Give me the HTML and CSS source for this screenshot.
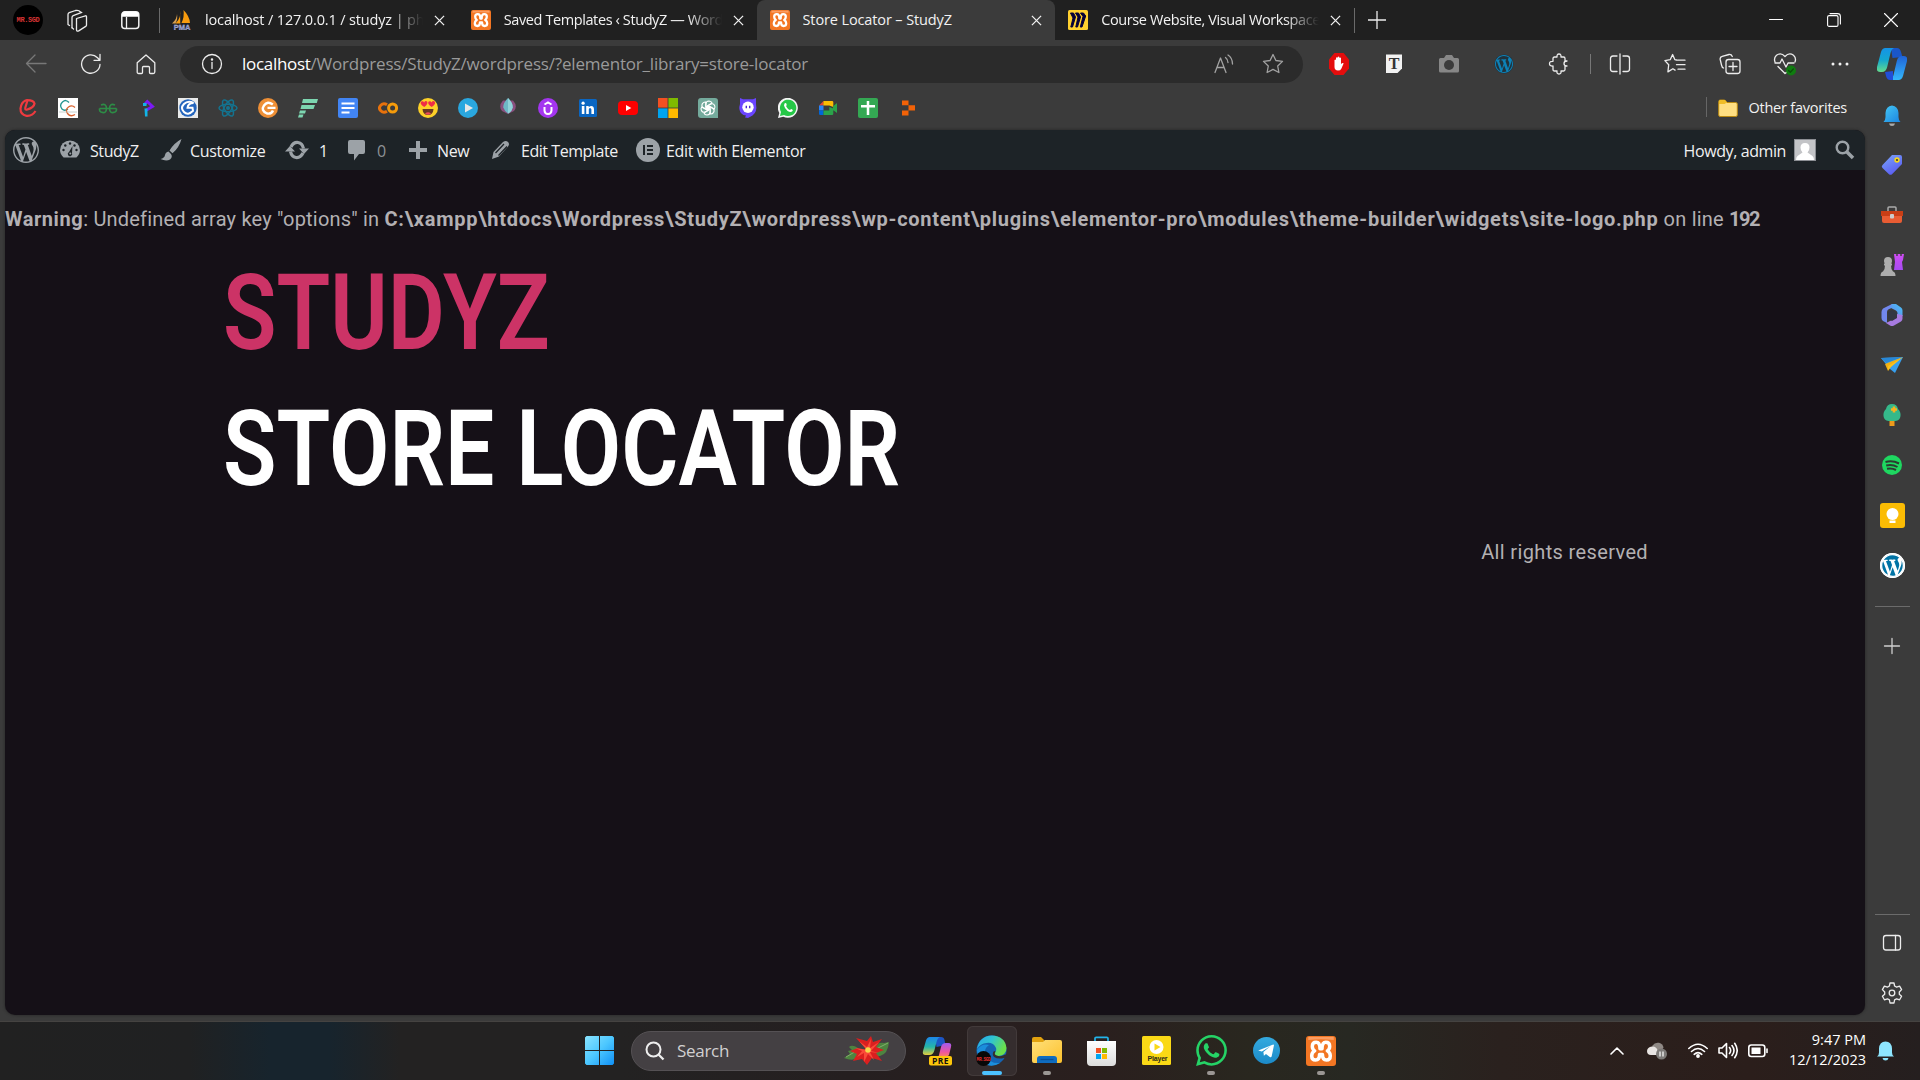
FILE: index.html
```html
<!DOCTYPE html>
<html lang="en">
<head>
<meta charset="utf-8">
<title>Store Locator – StudyZ</title>
<link rel="stylesheet" href="styles.css">
</head>
<body>
<svg class="defs" width="0" height="0" aria-hidden="true">
  <defs>
    <linearGradient id="gBlue" x1="0" y1="0" x2="1" y2="1"><stop offset="0" stop-color="#45c8f5"/><stop offset="1" stop-color="#1b84e0"/></linearGradient>
    <linearGradient id="gWin" x1="0" y1="0" x2="1" y2="1"><stop offset="0" stop-color="#8ae4ff"/><stop offset=".5" stop-color="#4cc7ff"/><stop offset="1" stop-color="#1090f5"/></linearGradient>
    <linearGradient id="gTag" x1="0" y1="0" x2=".6" y2="1"><stop offset="0" stop-color="#7ba7f8"/><stop offset="1" stop-color="#5a5cf2"/></linearGradient>
    <linearGradient id="gCopL" x1="0" y1="0" x2="0" y2="1"><stop offset="0" stop-color="#1593e8"/><stop offset=".5" stop-color="#14a7cf"/><stop offset="1" stop-color="#64dc8c"/></linearGradient>
    <linearGradient id="gCopR" x1="0" y1="0" x2="0" y2="1"><stop offset="0" stop-color="#1f63d8"/><stop offset="1" stop-color="#35b8fb"/></linearGradient>
    <linearGradient id="gPreL" x1="0" y1="0" x2="0" y2="1"><stop offset="0" stop-color="#1d86ea"/><stop offset=".55" stop-color="#25b6a8"/><stop offset="1" stop-color="#e6cf3c"/></linearGradient>
    <linearGradient id="gPreR" x1="0" y1="0" x2="0" y2="1"><stop offset="0" stop-color="#a25bf0"/><stop offset=".6" stop-color="#ee55a0"/><stop offset="1" stop-color="#fb8f4c"/></linearGradient>
    <linearGradient id="gFolder" x1="0" y1="0" x2="1" y2="1"><stop offset="0" stop-color="#ffe07a"/><stop offset="1" stop-color="#fcc12d"/></linearGradient>
    <linearGradient id="gStore" x1="0" y1="0" x2="0" y2="1"><stop offset="0" stop-color="#fff"/><stop offset="1" stop-color="#dcdcdc"/></linearGradient>
    <linearGradient id="gEdge" x1="0" y1="0" x2="1" y2=".4"><stop offset="0" stop-color="#2aa8e6"/><stop offset=".5" stop-color="#2fc3d2"/><stop offset="1" stop-color="#6ae04c"/></linearGradient>
    <linearGradient id="gHex" x1="0" y1="1" x2="1" y2="0"><stop offset="0" stop-color="#6a7cf0"/><stop offset="1" stop-color="#46c4f4"/></linearGradient>
    <linearGradient id="gRook" x1="0" y1="0" x2="0" y2="1"><stop offset="0" stop-color="#d04cf4"/><stop offset="1" stop-color="#a64cf2"/></linearGradient>
    <linearGradient id="gTele" x1="0" y1="0" x2="0" y2="1"><stop offset="0" stop-color="#34aadf"/><stop offset="1" stop-color="#1c8ac8"/></linearGradient>
    <symbol id="close" viewBox="0 0 12 12"><path d="M1 1l10 10M11 1L1 11" stroke="#f2f2f2" stroke-width="1.4" fill="none"/></symbol>
    <symbol id="xampp" viewBox="0 0 20 20"><rect width="20" height="20" rx="2" fill="#f37623"/><path d="M1.500.7h17v2q-8.500-1-17 0z" fill="#fb9d62"/><path d="M9.300 8.500Q9.300 4.200 6.800 4.200 4.200 4.200 4.200 6.800 4.200 8.900 5.800 9.900 3.800 11 3.800 13.300 3.800 16 6.400 16 9 16 9 12.300H11Q11 16 13.600 16 16.200 16 16.200 13.300 16.200 11 14.200 9.900 15.800 8.900 15.800 6.800 15.800 4.200 13.200 4.200 10.700 4.200 10.700 8.500z" fill="none" stroke="#fff" stroke-width="2.300" stroke-linejoin="round"/></symbol>
    <symbol id="wp" viewBox="0 0 20 20"><path d="M20 10c0-5.510-4.490-10-10-10C4.480 0 0 4.490 0 10c0 5.520 4.480 10 10 10 5.510 0 10-4.480 10-10zM7.780 15.370L4.370 6.220c.55-.02 1.170-.08 1.170-.08.5-.06.44-1.130-.06-1.110 0 0-1.450.11-2.370.11-.18 0-.37 0-.58-.01C4.120 2.690 6.870 1.110 10 1.110c2.330 0 4.450.87 6.050 2.340-.68-.11-1.650.39-1.650 1.580 0 .74.45 1.360.9 2.100.35.61.55 1.360.55 2.460 0 1.490-1.400 5-1.400 5l-3.030-8.370c.54-.02.82-.17.82-.17.5-.05.44-1.250-.06-1.220 0 0-1.440.12-2.380.12-.87 0-2.330-.12-2.330-.12-.5-.03-.56 1.200-.06 1.220l.92.08 1.260 3.410zM17.410 10c.24-.64.74-1.870.43-4.250.7 1.290 1.050 2.710 1.050 4.250 0 3.290-1.730 6.240-4.400 7.780.97-2.590 1.940-5.200 2.920-7.780zM6.100 18.090C3.120 16.650 1.110 13.530 1.110 10c0-1.300.23-2.480.72-3.590C3.250 10.300 4.670 14.200 6.100 18.090zm4.030-6.630l2.580 6.980c-.86.29-1.760.45-2.710.45-.79 0-1.570-.11-2.290-.33.81-2.380 1.620-4.740 2.420-7.100z"/></symbol>
    <symbol id="wa" viewBox="0 0 24 24"><path d="M17.472 14.382c-.297-.149-1.758-.867-2.030-.967-.273-.099-.471-.148-.67.15-.197.297-.767.966-.94 1.164-.173.199-.347.223-.644.075-.297-.15-1.255-.463-2.390-1.475-.883-.788-1.480-1.761-1.653-2.059-.173-.297-.018-.458.13-.606.134-.133.298-.347.446-.52.149-.174.198-.298.298-.497.099-.198.05-.371-.025-.52-.075-.149-.669-1.612-.916-2.207-.242-.579-.487-.5-.669-.51-.173-.008-.371-.01-.57-.01-.198 0-.52.074-.792.372-.272.297-1.040 1.016-1.040 2.479 0 1.462 1.065 2.875 1.213 3.074.149.198 2.096 3.200 5.077 4.487.709.306 1.262.489 1.694.625.712.227 1.360.195 1.871.118.571-.085 1.758-.719 2.006-1.413.248-.694.248-1.289.173-1.413-.074-.124-.272-.198-.57-.347m-5.421 7.403h-.004a9.870 9.870 0 01-5.031-1.378l-.361-.214-3.741.982.998-3.648-.235-.374a9.860 9.860 0 01-1.510-5.260c.001-5.450 4.436-9.884 9.888-9.884 2.640 0 5.122 1.030 6.988 2.898a9.825 9.825 0 012.893 6.994c-.003 5.450-4.437 9.884-9.885 9.884m8.413-18.297A11.815 11.815 0 0012.050 0C5.495 0 .16 5.335.157 11.892c0 2.096.547 4.142 1.588 5.945L.057 24l6.305-1.654a11.882 11.882 0 005.683 1.448h.005c6.554 0 11.890-5.335 11.893-11.893a11.821 11.821 0 00-3.480-8.413z"/></symbol>
  </defs>
</svg>

<div class="screen">
  <header class="tabbar">
    <div class="cell profile"><span class="avatar">MR.SGD</span></div>
    <div class="cell workspaces"><svg width="22" height="24" viewBox="0 0 22 24" class="line"><path d="M10.500 9.500l9-2.700q1-.2 1 1v8.500q0 .8-.8 1.100l-7 4.500q-2 .8-2.200-1z"/><path d="M6 18.800V8.500q0-1.400 1.200-1.900l8.600-3.200"/><path d="M2 15.500V5.500q0-1.400 1.200-1.900L9.500 1.500q3-.8 5 1.500M2 15.500l1.500 1M6 18.800l1.500 1.200" /></svg></div>
    <div class="cell tabactions"><svg width="19" height="20" viewBox="0 0 19 20"><rect x=".8" y="1.800" width="17" height="16.800" rx="3" fill="none" stroke="#f2f2f2" stroke-width="1.500"/><path d="M1 6.700V4.500Q1 1.800 3.800 1.800h11q2.800 0 2.800 2.700v2.200z" fill="#fff"/><path d="M5.500 7v11" stroke="#f2f2f2" stroke-width="1.300"/></svg></div>
    <div class="tabs">
      <div class="tab first">
        <svg class="fav" viewBox="0 0 20 20"><path d="M8 .5q1.500 7-4.500 13h4.800zM11.500 0q6 6 6.500 13H9.500q3-6 2-13z" fill="#f89c0e"/><path d="M5 4q0 5-5 9.500h3.500Q6 9 5 4z" fill="#d8a050"/><text x="10" y="19.600" class="pma">PMA</text></svg>
        <span class="label fade">localhost / 127.0.0.1 / studyz | phpMyAdmin</span><svg class="x"><use href="#close"/></svg>
      </div>
      <div class="tab">
        <svg class="fav"><use href="#xampp"/></svg>
        <span class="label fade">Saved Templates ‹ StudyZ — WordPress</span><svg class="x"><use href="#close"/></svg>
      </div>
      <div class="tab active">
        <svg class="fav"><use href="#xampp"/></svg>
        <span class="label">Store Locator – StudyZ</span><svg class="x"><use href="#close"/></svg>
      </div>
      <div class="tab">
        <svg class="fav" viewBox="0 0 20 20"><rect width="20" height="20" rx="1.500" fill="#ffd02f"/><path d="M2.500 3h3l2 4L4.500 17H2.800L5 8zM7.500 3h3l2 4L9.500 17H7.800L10 7zM12.500 3h3l2.200 3L14 17h-1.700L15 6.500z" fill="#050038" stroke="#050038"/></svg>
        <span class="label fade">Course Website, Visual Workspace for</span><svg class="x"><use href="#close"/></svg>
      </div>
    </div>
    <div class="newtab"><svg width="18" height="18" viewBox="0 0 18 18" class="line"><path d="M9 0v18M0 9h18"/></svg></div>
    <div class="winctl">
      <svg width="14" height="14" viewBox="0 0 14 14" class="line thin"><path d="M.5 6.500h13"/></svg>
      <svg width="14" height="14" viewBox="0 0 14 14" class="line thin"><rect x=".6" y="2.600" width="10.400" height="10.800" rx="1.500"/><path d="M3 .6h7.500q2.900 0 2.900 2.900v7.500"/></svg>
      <svg width="14" height="14" viewBox="0 0 14 14" class="line thin"><path d="M.5.5l13 13M13.500.5l-13 13"/></svg>
    </div>
  </header>

  <div class="body">
    <div class="main">
      <div class="toolbar">
        <div class="cell"><svg width="22" height="20" viewBox="0 0 22 20" class="line dim"><path d="M21 9.500H1.500M10 1L1.500 9.500 10 18"/></svg></div>
        <div class="cell"><svg width="22" height="22" viewBox="0 0 22 22" class="line"><path d="M20 11.500A9.200 9.200 0 1 1 17.500 4.700L20 7.300M20 1.300v6h-6"/></svg></div>
        <div class="cell"><svg width="20" height="21" viewBox="0 0 20 21" class="line"><path d="M1.200 8.700L10 1l8.800 7.700v9.300q0 1.500-1.500 1.500h-2.800q-1 0-1-1v-5q0-1-1-1h-5q-1 0-1 1v5q0 1-1 1H2.700q-1.500 0-1.500-1.500z"/></svg></div>
        <div class="address">
          <svg width="22" height="22" viewBox="0 0 22 22" class="line"><circle cx="11" cy="11" r="9.500"/><path d="M11 9.500v6"/><circle cx="11" cy="6.600" r=".6"/></svg>
          <span class="url"><b>localhost</b>/Wordpress/StudyZ/wordpress/?elementor_library=store-locator</span>
          <svg width="20" height="20" viewBox="0 0 20 20" class="line grey"><path d="M1 18.500L6.500 4l5.500 14.500M3 13.500h7M11.500 3.500q2.500 2 2.500 5M14 1q4.500 3 4.500 9"/></svg>
          <svg width="22" height="22" viewBox="0 0 22 22" class="line grey star"><path d="M11 1.500l2.900 6 6.600.9-4.800 4.600 1.200 6.500L11 16.400l-5.900 3.100 1.200-6.500L1.500 8.400l6.600-.9z"/></svg>
        </div>
        <div class="tools ext">
          <svg width="22" height="22" viewBox="0 0 22 22"><path d="M6.500 0h9L21 6.500v9L15.500 22h-9L1 15.500v-9z" fill="#e40d0d"/><path d="M6.500 11V7q1-1 1.500 0v3V4.700q1-1 1.700 0V9.500V3.900q1-.9 1.700 0V9.500V4.900q1-.9 1.600 0V11l1.500-1q1.300-.3 1 .7l-2.200 5q-.8 1.900-3.300 1.900-3.500-.2-3.500-3.600z" fill="#fff"/></svg>
          <svg width="18" height="20" viewBox="0 0 18 20"><path d="M1 .5h16v14L12.500 19H1z" fill="#f2f2f2"/><text x="9" y="15" class="tglyph">T</text></svg>
          <svg width="22" height="20" viewBox="0 0 22 20"><path d="M1 5.500q0-1.500 1.500-1.500H6l2-3h6l2 3h3.500q1.500 0 1.500 1.500V17q0 1.500-1.500 1.500h-17Q1 18.500 1 17z" fill="#878787"/><circle cx="11" cy="11" r="5" fill="#3b3b3b"/></svg>
          <svg width="20" height="20" viewBox="0 0 20 20"><circle cx="10" cy="10" r="9.500" fill="#20333d"/><use href="#wp" width="18" height="18" x="1" y="1" fill="#0d82b8"/></svg>
          <svg width="22" height="22" viewBox="0 0 22 22" class="line"><path d="M5 5.500q0-1.500 1.500-1.500H9q-.3-3 2-3t2 3h2.500Q17 4 17 5.500V8h2q-3 0-3 2.500T19 13h-2v3.500q0 1.500-1.500 1.500H13q.5 3-2 3t-2-3H6.500Q5 18 5 16.500V13q-3.500.3-3.500-2.300T5 8.300z"/></svg>
        </div>
        <div class="tools right">
          <svg width="22" height="22" viewBox="0 0 22 22" class="line"><path d="M8 3H4Q1.500 3 1.500 5.500v10.500Q1.500 18.500 4 18.500h4M14 3h4q2.500 0 2.500 2.500V16q0 2.500-2.500 2.500h-4M11 1v20"/></svg>
          <svg width="22" height="22" viewBox="0 0 22 22" class="line"><path d="M14 7.200L10.800 6.600 8.600 1.500 6.200 6.700.9 7.600l3.800 4.100-.8 7.200 5-3.200 2.200 1.400M14.500 7.200H21M12.500 11.700H21M14 16.200h7M10.800 6.600l1.700.4"/></svg>
          <svg width="22" height="22" viewBox="0 0 22 22" class="line"><path d="M4.500 15Q3 14.500 2.500 12L1.200 6.500q-.5-2.500 2-3.200L10 1.500q2.200-.5 3.300 2"/><rect x="7" y="6.500" width="14" height="14" rx="2.500"/><path d="M14 9.500v8M10 13.500h8"/></svg>
          <svg width="24" height="24" viewBox="0 0 24 24" class="line"><path d="M2 10Q.5 6 3.500 3.200 8 0 12 4.500q4-4.500 8.500-1.300Q23.500 6 22 10M5 14.500l7 7 2-1.500M2 11h5l2-4 4 8 2-4h6"/><circle cx="18" cy="18.500" r="5" fill="#107c10" stroke="none"/><path d="M15.600 18.500l1.700 1.800 3-3.300" stroke="#0a4f0a"/></svg>
          <svg width="20" height="6" viewBox="0 0 20 6"><g fill="#f2f2f2"><circle cx="3" cy="3" r="1.500"/><circle cx="10" cy="3" r="1.500"/><circle cx="17" cy="3" r="1.500"/></g></svg>
        </div>
      </div>

      <div class="bookmarks">
        <svg viewBox="0 0 20 20"><path d="M17.500 13Q14 18.500 8.500 17.800 2.300 16.500 2.500 10.500q.7-6 5-8 1.800-.7 1.500 1.500L7.300 9.800q-.5 2.500 2 1.700Q16 9.500 16.500 5.500 15.500 2 8.500 2.200" fill="none" stroke="#ee3a3f" stroke-width="2.200"/></svg>
        <svg viewBox="0 0 20 20"><rect width="20" height="20" fill="#fff"/><path d="M11 4.500Q8 .8 4.500 4t-.5 7q2.500 2.500 6 0" fill="none" stroke="#23948f" stroke-width="1.300"/><path d="M17 9.500q-3-3-6.500-.5t-1 6.500q3 4 7.500 1" fill="none" stroke="#d9602c" stroke-width="1.300"/><path d="M1 14h18" stroke="#b9c4c2" stroke-width=".8"/></svg>
        <svg viewBox="0 0 20 20"><path d="M1.500 10.500H18.500M3 7Q8.500 5 8.500 10.500T3 14Q1 13 1.700 10.500M17 7q-5.500-2-5.500 3.500t5.500 3.500q2-1 1.300-3.500" fill="none" stroke="#2d8c46" stroke-width="1.700"/></svg>
        <svg viewBox="0 0 20 20"><path d="M6.500 6.500L9.300 3.500l5.200 5-6 3.500" fill="none" stroke="#7b19f5" stroke-width="2.900"/><path d="M6.500 10.500h3V18.500H7zM5 5h3.500v3H5z" fill="#12b4e6"/></svg>
        <svg viewBox="0 0 20 20"><rect width="20" height="20" fill="#e9eaea"/><circle cx="10" cy="10" r="8.700" fill="#2465bd"/><path d="M15.500 5Q10 2 6 6t0 8 9-1.200l-.5-3H9.500Q10 5 15.500 5z" fill="none" stroke="#fff" stroke-width="2"/></svg>
        <svg viewBox="0 0 20 20"><g fill="none" stroke="#14738f" stroke-width="1.500"><ellipse cx="10" cy="10" rx="9" ry="3.700"/><ellipse cx="10" cy="10" rx="9" ry="3.700" transform="rotate(60 10 10)"/><ellipse cx="10" cy="10" rx="9" ry="3.700" transform="rotate(120 10 10)"/></g><circle cx="10" cy="10" r="2" fill="#14738f"/></svg>
        <svg viewBox="0 0 20 20"><circle cx="10" cy="10" r="10" fill="#ee8f36"/><path d="M14.800 6.500Q9.500 2.500 6 7.500T9 15.500q4.500.8 6-3M17.500 9.900H9.500" fill="none" stroke="#fff" stroke-width="2.400"/></svg>
        <svg viewBox="0 0 20 20"><path d="M5 1h15l-1.200 4H4zM3.500 7h13.500l-1.500 4H2.500zM2 12.500h6L7 15.500H1zM1 16.500h4.500L4.500 19.500H0z" fill="#7dd6b0"/></svg>
        <svg viewBox="0 0 20 20"><rect width="20" height="20" rx="2" fill="#4285f4"/><path d="M3.500 5.500h13M3.500 10h13M3.500 14.500h8" stroke="#fff" stroke-width="2.200"/></svg>
        <svg viewBox="0 0 20 20"><g fill="none" stroke="#f59b0b" stroke-width="3"><circle cx="14.600" cy="10" r="4"/><path d="M9 6.800Q5.500 4.500 2.800 7.300t0 5.500 6.200.4" stroke="#e8720c"/></g></svg>
        <svg viewBox="0 0 20 20"><circle cx="10" cy="10" r="10" fill="#fdd028"/><path d="M6.300 9Q1 5.700 3.300 3.500 5.200 2.500 6.100 4.500 7.300 2.300 9.100 3.500 10.500 5.700 6.300 9zM13.700 9Q8.700 5.700 10.700 3.500 12.700 2.500 13.600 4.500 14.800 2.300 16.600 3.500 18.500 5.700 13.700 9z" fill="#ef2c47"/><path d="M4.500 11h11q-.5 6-5.500 6t-5.500-6z" fill="#6b3a21"/><path d="M7 15.500q3-2.500 6 0-3 2.500-6 0z" fill="#ee4a5a"/></svg>
        <svg viewBox="0 0 20 20"><circle cx="10" cy="10" r="10" fill="#2aa7df"/><path d="M7 5.500l8 4.500-8 4.500z" fill="#e8e8e8"/></svg>
        <svg viewBox="0 0 20 20"><path d="M5 2.500Q0 8 4 13L10 16l6-3Q20 8 15 2.500z" fill="#8a4f7e"/><path d="M10 0Q5 5 5.300 9.500 7 14 10 15.500q3.500-1.500 4.700-6Q15 5 10 0z" fill="#6eb7c6"/><path d="M10 0q5 5 4.700 9.500Q13.500 14 10 15.500z" fill="#91d2d9"/></svg>
        <svg viewBox="0 0 20 20"><circle cx="10" cy="10" r="10" fill="#a435f0"/><path d="M6.500 9v3.500q.2 3.500 3.500 3.500t3.500-3.500V9M6.500 6.500L10 4.500l3.500 2" fill="none" stroke="#fff" stroke-width="2"/></svg>
        <svg viewBox="0 0 20 20"><rect x="1" y="1" width="18" height="18" rx="1.500" fill="#0a66c2"/><path d="M3.800 8h2.600v8H3.800zM8.200 8h2.500v1.200Q13 7 15 8.500q1 .8 1 3V16h-2.600v-4.500Q13.200 10 12 10t-1.200 1.500V16H8.200z" fill="#fff"/><circle cx="5.100" cy="5.200" r="1.600" fill="#fff"/></svg>
        <svg viewBox="0 0 20 20"><rect y="3" width="20" height="14" rx="4" fill="#f00"/><path d="M8 7l5.300 3L8 13z" fill="#fff"/></svg>
        <svg viewBox="0 0 20 20"><path d="M0 0h9.600v9.600H0z" fill="#f25022"/><path d="M10.400 0H20v9.600h-9.600z" fill="#7fba00"/><path d="M0 10.400h9.600V20H0z" fill="#00a4ef"/><path d="M10.400 10.400H20V20h-9.600z" fill="#ffb900"/></svg>
        <svg viewBox="0 0 20 20"><path d="M3 0h14q3 0 3 3v17H3q-3 0-3-3V3q0-3 3-3z" fill="#74aa9c"/><g fill="none" stroke="#fff" stroke-width="1.100"><path id="petal" d="M8 11.300V6q0-3 3-3 2.300.2 3 2l-4.500 2.700v4.500"/><use href="#petal" transform="rotate(60 10 10)"/><use href="#petal" transform="rotate(120 10 10)"/><use href="#petal" transform="rotate(180 10 10)"/><use href="#petal" transform="rotate(240 10 10)"/><use href="#petal" transform="rotate(300 10 10)"/></g></svg>
        <svg viewBox="0 0 20 20"><path d="M2 0l3 1.300h10L18 0v6q1.500 8-3.500 11.500L10 20l-3-.5 1-2Q5 17.500 3.500 15.500 0 12 2 6z" fill="#6a45ff"/><circle cx="10" cy="9.200" r="5.700" fill="#fff"/><path d="M8.300 7.700v2.500M11.700 7.700v2.500" stroke="#4b2bd0" stroke-width="1.400"/></svg>
        <svg viewBox="0 0 20 20"><path d="M0 20l1.300-5A10 10 0 1 1 5.300 18.700z" fill="#f4f4f4"/><path d="M2 18l1-4A8.200 8.200 0 1 1 6 17z" fill="#25c847"/><path d="M6.500 5.500q1.500-1.300 2.200 1l-.5 2Q9.500 11 11.700 11.900l1.700-1q2.200.8 1.200 2.200-2 2-5-.2T6 7.500z" fill="#fff"/></svg>
        <svg viewBox="0 0 20 20"><path d="M5.500 3L1 7.500h4.500z" fill="#ea4335"/><path d="M5.500 3H14q1.300 0 1.300 1.300V9l-4-1.500h-6z" fill="#fbbc04"/><path d="M1 7.500h4.500v5H1z" fill="#2684fc"/><path d="M1 12.500h4.500V17H2.300Q1 17 1 15.700z" fill="#0066da"/><path d="M5.500 12.500h5.800V9l4 1.500v5.200q0 1.300-1.300 1.300H5.500zM15 8.200L19 5v10l-4-3z" fill="#2ba34a"/></svg>
        <svg viewBox="0 0 20 20"><rect width="20" height="20" rx="2" fill="#34a853"/><path d="M10 3v14M3 8.300h14" stroke="#fff" stroke-width="2.500"/></svg>
        <svg viewBox="0 0 20 20"><path d="M4 2.500h6.500v4.800H4zM10.500 7.300h6.500v5.200h-6.500zM4 12.500h6.500v5H4z" fill="#f26207"/></svg>
        <div class="other">
          <svg viewBox="0 0 20 20"><path d="M.7 3.500q0-1.500 1.500-1.500h4.500L9 4.500h8.800q1.500 0 1.500 1.500v11q0 1.500-1.500 1.500H2.200Q.7 18.500.7 17z" fill="#ffdf82" stroke="#b98911"/><path d="M1 6h5.500L9 4.500 7 2H2Q1 2 1 3.500z" fill="#f0bd27"/></svg>
          <span>Other favorites</span>
        </div>
      </div>

      <div class="page">
        <nav class="adminbar">
          <svg class="wplogo"><use href="#wp"/></svg>
          <a class="site"><svg width="20" height="20" viewBox="0 0 20 20"><path d="M3.600 17.500Q0 14 0 10A10 9.500 0 0 1 20 10q0 4-3.600 7.500z" fill="#9ca2a7"/><g fill="#1d2327"><circle cx="3.500" cy="10" r="1.200"/><circle cx="5.300" cy="5.500" r="1.200"/><circle cx="10" cy="3.500" r="1.200"/><circle cx="14.500" cy="5.500" r="1.200"/><circle cx="16.500" cy="10" r="1.200"/><path d="M12.500 6L12 13a2.200 2.200 0 1 1-3-1z"/></g><circle cx="10.300" cy="13.500" r="1" fill="#9ca2a7"/></svg><span>StudyZ</span></a>
          <a class="customize"><svg width="22" height="22" viewBox="0 0 22 22"><path d="M21.500 0Q14 4 9.500 11.500l3 2.800Q19 9 21.500 0zM8.500 12.500q-3 .5-3.500 3.500-.5 3-4.500 4 5.500 2.500 9.500.5 3-2.500 1-5.500z" fill="#9ca2a7"/></svg><span>Customize</span></a>
          <a class="updates"><svg width="24" height="20" viewBox="0 0 24 20"><g fill="none" stroke="#9ca2a7" stroke-width="3.200"><path d="M6 7Q8.500 2 13 2.500q4.500.8 5.500 6M18 13q-2.500 5-7 4.500-4.500-.8-5.500-6"/></g><path d="M14 8.500h10L19 14zM0 11.500h10L5 6z" fill="#9ca2a7"/></svg><span>1</span></a>
          <a class="comments"><svg width="18" height="21" viewBox="0 0 18 21"><path d="M2 0h13q2 0 2 2v10q0 2-2 2h-4l-5 6.500V14H2q-2 0-2-2V2q0-2 2-2z" fill="#9ca2a7"/></svg><span>0</span></a>
          <a class="new"><svg width="18" height="18" viewBox="0 0 18 18"><path d="M9 0v18M0 9h18" stroke="#9ca2a7" stroke-width="4"/></svg><span>New</span></a>
          <a class="edit"><svg width="19" height="20" viewBox="0 0 19 20"><path d="M1 19l1.500-7L12 2q3-2 5 0 2 2 0 4.500L8 16.500z" fill="#9ca2a7"/><path d="M4.500 13L13 4M7.500 15.500L16 6.500" stroke="#1d2327" stroke-width="1.300"/></svg><span>Edit Template</span></a>
          <a class="elementor"><svg width="24" height="24" viewBox="0 0 24 24"><circle cx="12" cy="12" r="12" fill="#9ca2a7"/><path d="M8 7v10M11 8h6M11 12h6M11 16h6" stroke="#1d2327" stroke-width="2"/></svg><span>Edit with Elementor</span></a>
          <a class="howdy"><span>Howdy, admin</span><svg width="22" height="22" viewBox="0 0 22 22"><rect x=".5" y=".5" width="21" height="21" fill="#c3c4c7" stroke="#8c8f94"/><path d="M11 4q4.500 0 4.500 4.500 0 3-2 5l5 3.500q1.500 1.500 1.500 4H2q0-2.500 1.500-4l5-3.500q-2-2-2-5Q6.500 4 11 4z" fill="#fff"/></svg></a>
          <svg class="find" width="20" height="20" viewBox="0 0 20 20"><circle cx="7.500" cy="7.500" r="5.800" fill="none" stroke="#9ca2a7" stroke-width="2.400"/><path d="M12 12l6 6" stroke="#9ca2a7" stroke-width="3.600"/></svg>
        </nav>
        <p class="warning"><b>Warning</b>: Undefined array key "options" in <b class="path">C:\xampp\htdocs\Wordpress\StudyZ\wordpress\wp-content\plugins\elementor-pro\modules\theme-builder\widgets\site-logo.php</b> on line <b class="num">192</b></p>
        <h1 class="title brand"><span>STUDYZ</span></h1>
        <h1 class="title"><span>STORE LOCATOR</span></h1>
        <p class="rights">All rights reserved</p>
      </div>
    </div>

    <aside class="sidebar">
      <div class="copilot"><svg width="31" height="33" viewBox="0 0 30 32"><path d="M14 0h6q3 0 4 4l1.500 5-10 1z" fill="#1a56c8"/><path d="M8.500 0H17q-2.500 1-3.500 5l-3.300 14q-1.200 5-5.200 5H3q-4 0-3-5L4 4Q5.200 0 8.500 0z" fill="url(#gCopL)"/><path d="M21.500 32H13q2.500-1 3.500-5l3.300-14q1.200-5 5.200-5h2q4 0 3 5l-4 15q-1.200 4-4.500 4z" fill="url(#gCopR)"/><path d="M16 32h-3q-3 0-4-4l-1-4 8-1q0 5 0 9z" fill="#214fd8"/></svg></div>
      <div><svg viewBox="0 0 24 24"><path d="M3.500 19q2-2 2-5V10Q6 3 12 2.500 18 3 18.500 10v4q0 3 2 5z" fill="url(#gBlue)"/><path d="M9 20.500h6q-.5 2.500-3 2.500t-3-2.500z" fill="#aaa"/></svg></div>
      <div><svg viewBox="0 0 24 24"><path d="M12 2h8q2 0 2 2v7L12 21.300q-1.500 1-3 0L2.500 15q-1.500-1.500 0-3z" fill="url(#gTag)"/><circle cx="17" cy="7" r="2.700" fill="#f5d51d"/><circle cx="17" cy="7" r="1.100" fill="#3b3b3b"/></svg></div>
      <div><svg viewBox="0 0 24 24"><path d="M8 8V5q0-1 1-1h6q1 0 1 1v3" fill="none" stroke="#aaa" stroke-width="1.500"/><path d="M2 12h20v6q0 2-2 2H4q-2 0-2-2z" fill="#e85c33"/><path d="M1 8h22v5H1z" fill="#c83e16"/><rect x="10" y="11" width="4" height="4.500" rx="1" fill="#ccc"/></svg></div>
      <div><svg viewBox="0 0 24 24"><path d="M14 1h2.300v2h1.400V1h2.600v2h1.400V1H24l-1 6-1 2 1 8h-9l1-8z" fill="url(#gRook)"/><path d="M4 8a4 4 0 1 1 8 0q0 1.500-1 2.500h1v2h-1q0 4 2 6 2.500.5 2.500 4.500H.5q0-4 2.500-4.500 2-2 2-6H4v-2h1Q4 9.500 4 8z" fill="#adadad"/></svg></div>
      <div><svg viewBox="0 0 24 24"><path d="M12 1L3 5.500Q1.500 7 1.500 9v6q0 2 1.500 3l4 2V9q0-2 2-3l7-3.500z" fill="#7288ee"/><path d="M12 1l4 0 5 3.500q1.500 1 1.500 3V13l-5 1V10q0-1.500-1.500-2.500L11 5 9 6z" fill="url(#gHex)"/><path d="M22.500 12v3.500q0 2-1.500 3l-7 4q-2 1-4 0L6 20l9-4.500q2-1 2-3V11z" fill="#a77be0"/><path d="M12 7l5 3v5l-5 3-4-2.500v-6z" fill="#333743"/></svg></div>
      <div><svg viewBox="0 0 24 24"><path d="M1 5l22-1-8 16-5-4z" fill="#37a0ef"/><path d="M23 4L8 12v6l3-4z" fill="#fbc01d"/><path d="M1 5l22-1L6 10z" fill="#2887d6"/><path d="M23 4L5 11l3 7v-5z" fill="#f3b112"/></svg></div>
      <div><svg viewBox="0 0 24 24"><path d="M9.500 16h5v7h-5z" fill="#ec9a1c"/><path d="M12 1Q7 1 6 6q-3 3-2.500 7 .5 4.500 5 5h7q4.500-.5 5-5 .5-4-2.500-7-1-5-6-5z" fill="#35b98a"/><path d="M14 3.500v6M11 6.500h6" stroke="#f8b31f" stroke-width="2.600"/></svg></div>
      <div><svg viewBox="0 0 24 24"><circle cx="12" cy="12" r="10" fill="#1ed760"/><path d="M5.500 9q7-2 13.500 1.500M6.200 12.500q6-1.500 11.300 1.500M7 15.800q5-1 9 1.200" fill="none" stroke="#2c3a30" stroke-width="2"/></svg></div>
      <div><svg class="big" viewBox="0 0 25 25"><rect width="25" height="25" rx="3" fill="#fbbc04"/><circle cx="12.500" cy="11" r="6" fill="#fff"/><path d="M9.500 14h6v2.200h-6zM9.500 17.500h6V20h-6z" fill="#fff"/></svg></div>
      <div><svg class="big" viewBox="0 0 25 25"><circle cx="12.500" cy="12.500" r="12.500" fill="#fff"/><circle cx="12.500" cy="12.500" r="11.200" fill="#0073a5"/><use href="#wp" width="23" height="23" x="1" y="1" fill="#fff"/><circle cx="12.500" cy="12.500" r="11.900" fill="none" stroke="#fff" stroke-width="1.200"/></svg></div>
      <hr>
      <div class="add"><svg viewBox="0 0 24 24" class="line grey2"><path d="M12 4.500v15M4.500 12h15"/></svg></div>
      <hr class="low">
      <div><svg viewBox="0 0 24 24" class="line"><rect x="3.500" y="4.500" width="17" height="14.500" rx="2.500"/><path d="M15.500 4.500V19"/></svg></div>
      <div><svg viewBox="0 0 24 24" class="line"><path d="M10 2h4l.6 3 2 1.100 3-1 2 3.500L19.300 11v2.200l2.300 2.100-2 3.500-3-1-2 1.100-.6 3.100h-4l-.6-3.100-2-1.100-3 1-2-3.500L4.700 13.200V11L2.400 8.600l2-3.500 3 1 2-1.100z"/><circle cx="12" cy="12" r="2.800"/></svg></div>
    </aside>
  </div>

  <footer class="taskbar">
    <div class="start"><svg width="29" height="29" viewBox="0 0 29 29"><path d="M1.500 0H14v14H0V1.500zM15 0h12.500L29 1.500V14H15zM0 15h14v14H1.500L0 27.500zM15 15h14v12.500L27.500 29H15z" fill="url(#gWin)"/></svg></div>
    <div class="search">
      <svg width="20" height="20" viewBox="0 0 20 20"><circle cx="8.500" cy="8.500" r="7" fill="none" stroke="#eee" stroke-width="2"/><path d="M13.500 13.500l5 5" stroke="#eee" stroke-width="2.300"/></svg>
      <span>Search</span>
      <svg width="46" height="29" viewBox="0 0 46 29"><path d="M14 12Q8 8 5 11l3 3-4 1 2 3-6 4q9 4 16-1zM30 11q4-5 10-4l5-1q-1 12-9 14-6 1-9-2z" fill="#4d8440"/><path d="M14 14L2 21M30 14l14-7" stroke="#8fb773" stroke-width=".8"/><path d="M23 14L12 2l11 3 4-5 2 6 9-3-6 8 8 3-8 3 6 8-10-3-5 7-5-6-9 2 4-7-7-3 8-3z" fill="#da1f1f"/><path d="M23 14L15 5l8 6 4-8-1 9 9-6-8 9 8 2-9-1 4 8-6-6-4 8v-9l-7 4 5-6-7-3z" fill="#fa4a38"/><circle cx="24" cy="14" r="2.800" fill="#f4d84a"/></svg>
    </div>
    <div class="app"><svg width="30" height="30" viewBox="0 0 30 30"><path d="M13 1h6q3 0 3.500 3l1 5-9 2z" fill="#1d55c4"/><path d="M8 1h10q-2.500 1-3.500 5l-2 8q-1.200 5-5 5H3.500Q0 19 1 15L4 4.500Q5 1 8 1z" fill="url(#gPreL)"/><path d="M17 19l2-8q1-4 5-4h2.500Q30 7 29 11l-2 8-3 3h-8z" fill="url(#gPreR)"/><rect x="7" y="20" width="23" height="9.500" rx="2" fill="#fdc60a"/><text x="18.500" y="27.800" class="pre">PRE</text></svg></div>
    <div class="app open"><svg width="31" height="31" viewBox="0 0 31 31"><circle cx="15.500" cy="15.500" r="15" fill="#1464b4"/><path d="M1 14Q3 1 16 .5 29 1 30.500 13q0 7-8 8-5 0-4-3 3-3 1-6-3-5-9-4-6 .5-9.500 6z" fill="url(#gEdge)"/><path d="M1 15q5-7 12-5-6 4-3 11 4 8 14 7-6 4-13 2Q1 27 1 15z" fill="#1b8edc"/><path d="M19.500 16.500q-1.500 2 0 3.500 2 1.500 6 1l4-1.500 1.500 0v3l-3 .5q-6 1.500-10-1-2.500-3 0-6z" fill="#352d2e"/><circle cx="7.500" cy="23.500" r="7.500" fill="#080808"/><text x="7.500" y="25.500" class="badge">MR.SGD</text></svg></div>
    <div class="app run"><svg width="30" height="27" viewBox="0 0 30 27"><path d="M0 8V2q0-2 2-2h7l3.500 3.500V8z" fill="#e2a20f"/><path d="M0 5h11l2-2h15q2 0 2 2v19q0 2-2 2H2q-2 0-2-2z" fill="url(#gFolder)"/><path d="M5 26v-4q0-3 3-3h14q3 0 3 3v4z" fill="#0f6cc0"/><path d="M8.500 22.500h13" stroke="#0a4f96" stroke-width="1.300"/></svg></div>
    <div class="app"><svg width="29" height="30" viewBox="0 0 29 30"><path d="M8 6V2.500Q8 1.300 9.200 1.300h10.600q1.200 0 1.200 1.200V6" fill="none" stroke="#22b4ea" stroke-width="1.700"/><path d="M0 5h29v21q0 4-4 4H4q-4 0-4-4z" fill="url(#gStore)"/><path d="M9 12h5v5H9z" fill="#f25022"/><path d="M15 12h5v5h-5z" fill="#7fba00"/><path d="M9 18h5v5H9z" fill="#00a4ef"/><path d="M15 18h5v5h-5z" fill="#ffb900"/></svg></div>
    <div class="app"><svg width="29" height="29" viewBox="0 0 29 29"><rect width="29" height="29" rx="1.500" fill="#fad916"/><circle cx="14.500" cy="11" r="7" fill="#fff"/><path d="M12.500 7.500l6 3.500-6 3.500z" fill="#fad916"/><text x="15.500" y="25" class="player">Player</text></svg></div>
    <div class="app run"><svg width="31" height="31" fill="#25d366"><use href="#wa"/></svg></div>
    <div class="app"><svg width="27" height="27" viewBox="0 0 26 26"><circle cx="13" cy="13" r="13" fill="url(#gTele)"/><path d="M5 13L19.500 7.200q1 0 .6 1.300L18 18.500q-.5 1.500-1.800.7L12.500 16.300 10.500 18l-.5-3.500 7-5.800-8.500 5.300z" fill="#fff"/></svg></div>
    <div class="app run"><svg width="30" height="30"><use href="#xampp"/></svg></div>
    <div class="tray">
      <svg width="14" height="8" viewBox="0 0 14 8" class="line bold chev"><path d="M1 7l6-6 6 6"/></svg>
      <svg width="21" height="18" viewBox="0 0 21 18" class="cloud"><path d="M5 4Q8 0 12 .8q4 1 4.500 5Q15 9 9 8z" fill="#8f8985"/><path d="M4 13Q0 13 0 9q.3-4 5-4.500Q9 4 10.500 8L12 13z" fill="#e8e4e2"/><circle cx="14.500" cy="12" r="5.500" fill="#7d7a78"/><path d="M13 9.500v5M16 9.500v5" stroke="#fff" stroke-width="1.200"/></svg>
      <svg width="20" height="15" viewBox="0 0 20 15" class="line bold"><path d="M.8 5.500q9.200-8.500 18.400 0M3.500 8.500q6.500-6 13 0M6.200 11.300q3.800-3.500 7.600 0"/><circle cx="10" cy="13" r="1.100" fill="#fff"/></svg>
      <svg width="20" height="17" viewBox="0 0 20 17" class="line bold"><path d="M1 6h3l4.500-4.500v14L4 11H1zM11.500 5.500q2.300 3 0 6M14 3.500q4 5 0 10M16.700 1.300q5 7.200 0 14.400"/></svg>
      <svg width="20" height="14" viewBox="0 0 20 14" class="line bold"><rect x=".8" y="1" width="16" height="11.500" rx="2.500"/><path d="M19 5v3.500"/><rect x="3.500" y="3.500" width="9" height="6.500" fill="#fff" stroke="none"/></svg>
      <div class="clock"><span>9:47 PM</span><span class="date">12/12/2023</span></div>
      <svg width="17" height="20" viewBox="0 0 17 20" class="bell"><path d="M0 15.500q2-1 2-4V7.500Q2.500.7 8.500.5q6 .2 6.500 7v4q0 3 2 4zM5.500 17h6q-.5 2.500-3 2.500t-3-2.500z" fill="#8ee6ff"/></svg>
    </div>
  </footer>
</div>
</body>
</html>
```
FILE: styles.css
```css
* { box-sizing: border-box; }
body { margin: 0; background: #3b3b3b; font-family: "Open Sans", "Noto Sans", sans-serif; color: #f2f2f2; }
.defs { position: absolute; }
svg { display: block; flex: none; }
.screen { width: 1920px; height: 1080px; display: flex; flex-direction: column; overflow: hidden; }
.line { fill: none; stroke: #ececec; stroke-width: 1.3; stroke-linejoin: round; stroke-linecap: round; }
.line.thin { stroke-width: 1.1; stroke: #fff; }
.line.bold { stroke-width: 1.6; stroke: #fff; }
.line.dim { stroke: #787878; }
.line.grey { stroke: #a2a2a2; }
.line.grey2 { stroke: #cfcfcf; }
.cell { display: flex; align-items: center; justify-content: center; }

/* tab strip */
.tabbar { height: 40px; background: #202020; display: flex; align-items: stretch; font-size: 14.5px; letter-spacing: -.4px; }
.profile { width: 56px; }
.workspaces { width: 43px; padding: 1px 1px 0 0; }
.tabactions { width: 60px; padding-left: 2px; }
.avatar { width: 30px; height: 30px; border-radius: 50%; background: #000; color: #d63434; font: bold 7px/30px "Liberation Mono", monospace; letter-spacing: -.4px; text-align: center; white-space: nowrap; }
.tabs { display: flex; width: 1195px; }
.tab { flex: 1; min-width: 0; position: relative; display: flex; align-items: center; padding: 0 13px; }
.tab.first::before, .newtab::before { content: ""; width: 1px; height: 25px; background: #6a6a6a; position: absolute; left: 0; top: 8px; }
.tab.first { letter-spacing: -.15px; }
.tab.active { background: #3b3b3b; border-radius: 8px 8px 0 0; letter-spacing: -.12px; }
.fav { width: 20px; height: 20px; margin-right: 13px; }
.label { flex: 1; min-width: 0; white-space: nowrap; overflow: hidden; line-height: 24px; }
.fade { -webkit-mask-image: linear-gradient(90deg, #000 calc(100% - 34px), transparent); mask-image: linear-gradient(90deg, #000 calc(100% - 34px), transparent); }
.x { width: 11px; height: 11px; margin-left: 11px; }
.pma { font: bold 7.500px "Liberation Sans", sans-serif; text-anchor: middle; letter-spacing: 0; fill: #6c78b8; stroke: #c7cbe6; stroke-width: .3; }
.newtab { position: relative; width: 46px; display: flex; align-items: center; justify-content: center; }
.winctl { margin-left: auto; display: flex; align-items: center; gap: 43.500px; padding-right: 22px; }

.body { height: 981px; display: flex; }
.main { width: 1865px; display: flex; flex-direction: column; }

/* toolbar */
.toolbar { height: 48px; display: flex; align-items: center; padding-left: 8px; }
.toolbar > div { flex: none; }
.toolbar > .cell { width: 55px; }
.address { width: 1123px; height: 37px; margin: 0 0 0 7px; border-radius: 19px; background: #2b2b2b; display: flex; align-items: center; padding: 0 19px 0 21px; }
.url { margin-left: 19px; flex: 1; font-size: 17px; letter-spacing: -.19px; color: #9a9a9a; white-space: nowrap; line-height: 30px; }
.url b { font-weight: 400; color: #fff; letter-spacing: -.3px; }
.star { margin-left: 28px; }
.tools { width: 275px; display: grid; grid-template-columns: repeat(5, 1fr); justify-items: center; align-items: center; }
.ext { margin-left: 8px; }
.right { margin-left: 6px; width: 276px; position: relative; }
.right::before { content: ""; position: absolute; left: -2px; top: 2px; width: 1px; height: 20px; background: #777; }
.tglyph { font: bold 16px "Liberation Serif", serif; text-anchor: middle; fill: #333; }

/* bookmarks */
.bookmarks { height: 42px; display: flex; align-items: center; gap: 20px; padding: 0 18px 2px; }
.bookmarks svg { width: 20px; height: 20px; }
.other { margin-left: auto; display: flex; align-items: center; gap: 10px; padding-left: 12px; height: 20px; font-size: 14.500px; letter-spacing: -.22px; position: relative; }
.other span { margin-top: -1px; }
.other::before { content: ""; position: absolute; left: 0; top: -1px; width: 1px; height: 20px; background: #666; }

/* web page */
.page { width: 1860px; height: 885px; margin-left: 5px; background: #151017; border-radius: 10px; overflow: hidden; box-shadow: 0 0 3px #222; }
.adminbar { height: 40px; background: #1d2327; display: flex; align-items: center; padding: 0 10px 0 8px; font-size: 16px; letter-spacing: -.4px; color: #f0f0f1; }
.adminbar a { display: flex; align-items: center; }
.adminbar span { line-height: 24px; padding-top: 2px; white-space: nowrap; }
.wplogo { width: 26px; height: 26px; fill: #9ca2a7; }
.site { margin-left: 21px; width: 100px; gap: 10px; }
.customize { width: 125px; gap: 8px; }
.customize span { letter-spacing: -.3px; }
.updates { width: 63px; gap: 10px; }
.comments { width: 61px; gap: 11px; }
.comments span { color: #8d9195; }
.new { width: 82px; gap: 10px; }
.edit { width: 145px; gap: 11px; }
.edit span { letter-spacing: -.45px; }
.elementor { gap: 6px; }
.elementor span { letter-spacing: -.35px; }
.howdy { margin-left: auto; gap: 8px; }
.find { margin-left: 19px; }
.warning, .rights { margin: 0; font-family: Roboto, sans-serif; font-size: 20px; line-height: 30px; color: #b3b0b3; white-space: nowrap; }
.warning { margin-top: 34px; letter-spacing: .2px; }
.warning b { letter-spacing: .55px; }
.warning .path { letter-spacing: .72px; }
.warning .num { letter-spacing: -1.5px; }
.title { margin: 0 0 0 218px; font: 600 105px/136px Roboto, sans-serif; color: #fff; white-space: nowrap; }
.title span { display: inline-block; transform: scaleX(.834); transform-origin: 0 50%; }
.brand { margin-top: 12px; color: #cc3366; }
.rights { margin: 19px 217px 0 0; text-align: right; letter-spacing: .36px; }

/* sidebar */
.sidebar { width: 55px; padding-right: 1px; display: flex; flex-direction: column; align-items: center; }
.sidebar div { height: 50px; display: flex; align-items: center; justify-content: center; }
.sidebar svg { width: 24px; height: 24px; }
.sidebar svg.big { width: 25px; height: 25px; }
.sidebar .copilot { padding-bottom: 2px; }
.sidebar .copilot svg { width: 30px; height: 32px; }
.sidebar hr { width: 35px; height: 1px; border: 0; background: #6b6b6b; margin: 16px 0 0; }
.sidebar .add { margin-top: 14px; }
.sidebar .low { margin: auto 0 3px; }
.sidebar > div:last-child { margin-bottom: 3px; }

/* taskbar */
.taskbar { height: 59px; border-top: 1px solid #454341; display: flex; align-items: center; padding-bottom: 1px; background: linear-gradient(90deg, #212121 0, #202122 190px, #17242d 270px, #17242d 330px, #232222 400px, #232222 620px, #251f20 850px, #2a1f1e 1100px, #29271f 1250px, #272822 1350px, #2a211e 1500px, #2b1e1b 1750px, #251f1f 1920px); }
.start { margin-left: 585px; }
.search { width: 275px; height: 40px; margin: 0 6px 0 17px; border-radius: 20px; background: #444043; border: 1px solid #555154; display: flex; align-items: center; padding: 0 15px 0 13px; font-size: 17px; color: #d2d0d1; letter-spacing: -.3px; }
.search span { flex: 1; margin-left: 12px; line-height: 26px; }
.app { position: relative; width: 50px; height: 50px; margin-right: 4.900px; border-radius: 6px; display: flex; align-items: center; justify-content: center; }
.open { background: #352d2e; box-shadow: inset 0 0 0 1px #423a3a; }
.open::after, .run.app::after { content: ""; position: absolute; bottom: 1px; width: 8px; height: 4px; border-radius: 2px; background: #9b9794; }
.open::after { width: 20px; background: #4cc2ff; }
.pre { font: bold 8.500px "Open Sans", sans-serif; text-anchor: middle; fill: #111; letter-spacing: .4px; }
.badge { font: bold 4.500px "Liberation Mono", monospace; text-anchor: middle; fill: #e02c2c; letter-spacing: -.4px; }
.player { font: bold 7px "Liberation Sans", sans-serif; text-anchor: middle; fill: #2a2a1a; letter-spacing: -.2px; }
.tray { margin-left: auto; display: flex; align-items: center; padding-right: 26px; }
.tray svg { margin-right: 10px; }
.tray .chev { margin-right: 23px; }
.tray .cloud { margin-right: 20px; }
.clock { width: 88px; display: flex; flex-direction: column; align-items: flex-end; padding-bottom: 2px; font-size: 14.500px; line-height: 20px; letter-spacing: 0; margin-right: 11px; color: #fff; }
.tray .bell { margin-right: 0; }
```
